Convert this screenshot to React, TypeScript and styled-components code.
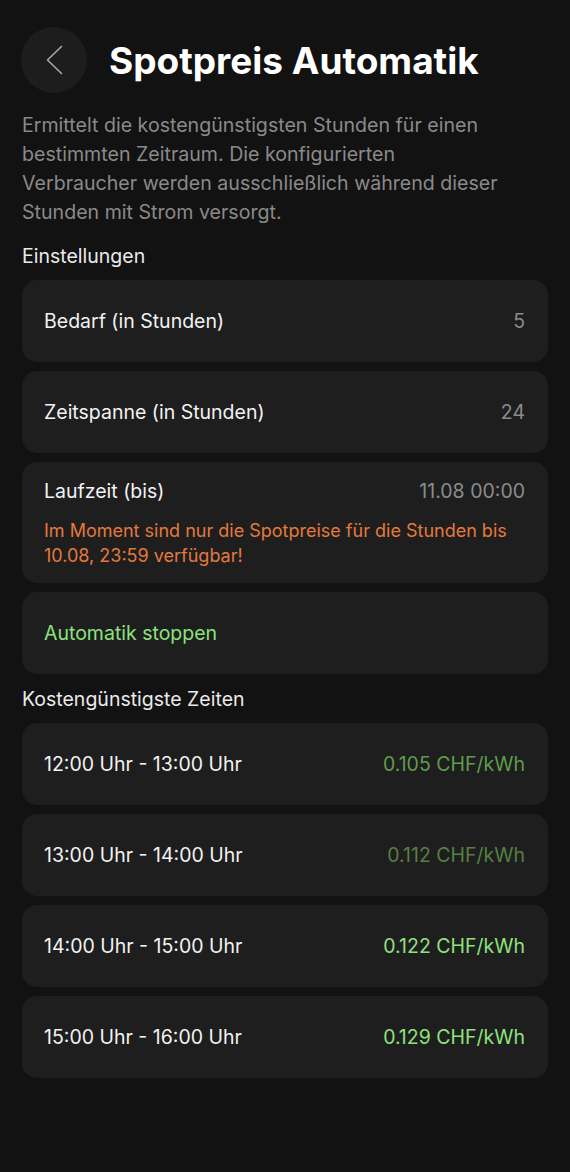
import React from "react";
import styled, { createGlobalStyle } from "styled-components";

const Global = createGlobalStyle`
  html, body { margin: 0; padding: 0; background: #121212; }
  body { font-family: Inter, "Noto Sans", sans-serif; -webkit-font-smoothing: antialiased; }
`;

const Page = styled.div`
  width: 570px;
  min-height: 1172px;
  box-sizing: border-box;
  background: #121212;
  padding: 27px 22px 40px 22px;
  display: flex;
  flex-direction: column;
`;

const Header = styled.header`
  display: flex;
  align-items: center;
  gap: 22px;
`;

const BackButton = styled.button`
  width: 66px;
  height: 66px;
  border-radius: 50%;
  border: none;
  background: #1d1d1d;
  display: flex;
  align-items: center;
  justify-content: center;
  padding: 0;
  margin-left: -1px;
`;

const Title = styled.h1`
  margin: 0;
  color: #ffffff;
  font-size: 37px;
  font-weight: 700;
  letter-spacing: 0;
`;

const Description = styled.p`
  margin: 18px 0 0 0;
  color: #8a8a8a;
  font-size: 19.6px;
  line-height: 29px;
`;

const SectionTitle = styled.h2<{ $top: number }>`
  margin: ${(p) => p.$top}px 0 12px 0;
  color: #eaeaea;
  font-size: 19.5px;
  font-weight: 400;
  line-height: 24px;
`;

const List = styled.div`
  display: flex;
  flex-direction: column;
  gap: 9px;
`;

const Card = styled.div`
  background: #1e1e1e;
  border-radius: 15px;
  min-height: 82px;
  box-sizing: border-box;
  padding: 0 23px 0 22px;
  display: flex;
  align-items: center;
  justify-content: space-between;
`;

const StackCard = styled.div`
  background: #1e1e1e;
  border-radius: 15px;
  box-sizing: border-box;
  padding: 17px 23px 15px 22px;
  display: flex;
  flex-direction: column;
  gap: 15px;
`;

const Row = styled.div`
  display: flex;
  align-items: center;
  justify-content: space-between;
`;

const Label = styled.span<{ $color?: string }>`
  color: ${(p) => p.$color ?? "#f2f2f2"};
  font-size: 19.5px;
  line-height: 24px;
`;

const Value = styled.span<{ $color?: string }>`
  color: ${(p) => p.$color ?? "#8c8c8c"};
  font-size: 19.5px;
  line-height: 24px;
`;

const Warning = styled.p`
  margin: 0;
  color: #e5793d;
  font-size: 18px;
  line-height: 25px;
`;

const times = [
  { from: "12:00", to: "13:00", price: "0.105", color: "#5e9c4b" },
  { from: "13:00", to: "14:00", price: "0.112", color: "#567f45" },
  { from: "14:00", to: "15:00", price: "0.122", color: "#8ee27c" },
  { from: "15:00", to: "16:00", price: "0.129", color: "#8ee27c" },
];

export default function App() {
  return (
    <>
      <Global />
      <Page>
        <Header>
          <BackButton aria-label="Zurück">
            <svg width="66" height="66" viewBox="0 0 66 66">
              <polyline
                points="40.5,19.5 26.5,33 40.5,46.5"
                fill="none"
                stroke="#a8a8a8"
                strokeWidth="1.6"
                strokeLinecap="round"
                strokeLinejoin="round"
              />
            </svg>
          </BackButton>
          <Title>Spotpreis Automatik</Title>
        </Header>
        <Description>
          Ermittelt die kostengünstigsten Stunden für einen
          <br />
          bestimmten Zeitraum. Die konfigurierten
          <br />
          Verbraucher werden ausschließlich während dieser
          <br />
          Stunden mit Strom versorgt.
        </Description>

        <SectionTitle $top={17}>Einstellungen</SectionTitle>
        <List>
          <Card>
            <Label>Bedarf (in Stunden)</Label>
            <Value>5</Value>
          </Card>
          <Card>
            <Label>Zeitspanne (in Stunden)</Label>
            <Value>24</Value>
          </Card>
          <StackCard>
            <Row>
              <Label>Laufzeit (bis)</Label>
              <Value>11.08 00:00</Value>
            </Row>
            <Warning>
              Im Moment sind nur die Spotpreise für die Stunden bis 10.08, 23:59 verfügbar!
            </Warning>
          </StackCard>
          <Card>
            <Label $color="#8ee27c">Automatik stoppen</Label>
          </Card>
        </List>

        <SectionTitle $top={13}>Kostengünstigste Zeiten</SectionTitle>
        <List>
          {times.map((t) => (
            <Card key={t.from}>
              <Label>
                {t.from} Uhr - {t.to} Uhr
              </Label>
              <Value $color={t.color}>{t.price} CHF/kWh</Value>
            </Card>
          ))}
        </List>
      </Page>
    </>
  );
}
